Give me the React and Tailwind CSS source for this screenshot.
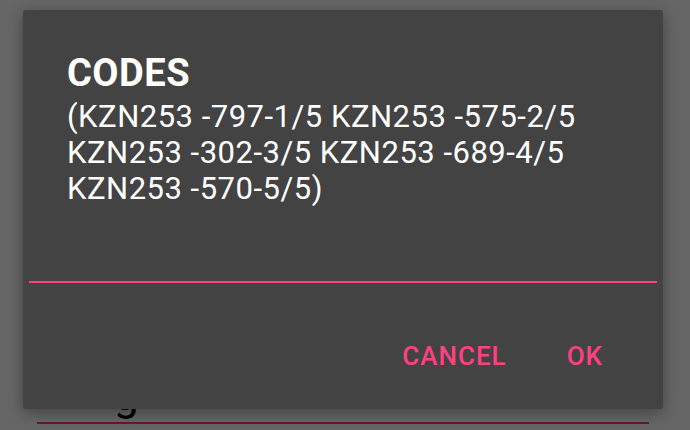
export default function App() {
    return (
        <div className="relative h-[430px] w-[690px] overflow-hidden bg-white font-['Roboto',sans-serif]">
            {/* page behind the dialog */}
            <div className="flex h-full flex-col justify-end px-[37px] pb-[6px]">
                <div className="mb-[5px] pl-[77px] text-[44px] leading-[44px] text-black">g</div>
                <div className="h-[2px] w-[612px] bg-[#ff4081]" />
            </div>

            {/* backdrop */}
            <div className="absolute inset-0 bg-black/60 pl-[23px] pt-[10px]">
                <div className="flex h-[399px] w-[640px] flex-col rounded-[3px] bg-[#434343] shadow-[0_4px_16px_rgba(0,0,0,0.35)]">
                    <div className="px-[44px] pt-[39px]">
                        <h2 className="text-[38px] font-bold leading-[48px] tracking-[0.5px] text-white">CODES</h2>
                        <p className="mt-[2px] text-[31px] leading-[36px] tracking-[0.5px] text-white">
                            (KZN253 -797-1/5 KZN253 -575-2/5 KZN253 -302-3/5 KZN253 -689-4/5 KZN253 -570-5/5)
                        </p>
                    </div>
                    <div className="mx-[6px] mt-auto h-[2px] bg-[#ff4081]" />
                    <div className="flex justify-end gap-[60px] pr-[60px] pt-[58px] pb-[38px]">
                        <button className="text-[26px] font-medium leading-[30px] tracking-[1px] text-[#ff4081]">CANCEL</button>
                        <button className="text-[26px] font-medium leading-[30px] tracking-[1px] text-[#ff4081]">OK</button>
                    </div>
                </div>
            </div>
        </div>
    );
}
